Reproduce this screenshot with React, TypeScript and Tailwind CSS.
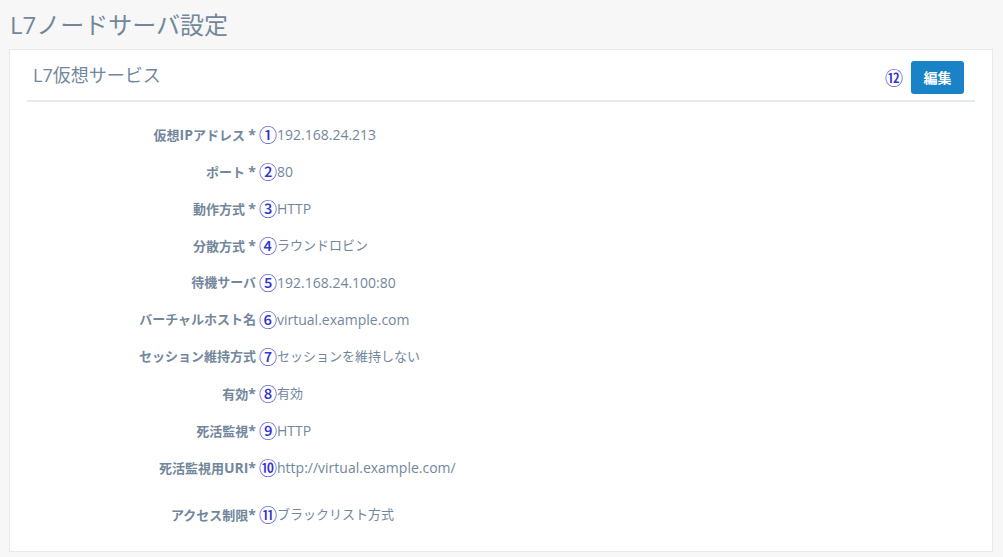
import React from "react";

type Row = { label: React.ReactNode; num: string; value: string; latin?: boolean; extra?: string };

const L = ({ children }: { children: React.ReactNode }) => (
  <span className="text-[14px]">{children}</span>
);

const rows: Row[] = [
  { label: <>仮想<L>IP</L>アドレス <L>*</L></>, num: "①", value: "192.168.24.213", latin: true },
  { label: <>ポート <L>*</L></>, num: "②", value: "80", latin: true },
  { label: <>動作方式 <L>*</L></>, num: "③", value: "HTTP", latin: true },
  { label: <>分散方式 <L>*</L></>, num: "④", value: "ラウンドロビン" },
  { label: "待機サーバ", num: "⑤", value: "192.168.24.100:80", latin: true },
  { label: "バーチャルホスト名", num: "⑥", value: "virtual.example.com", latin: true },
  { label: "セッション維持方式", num: "⑦", value: "セッションを維持しない" },
  { label: <>有効<L>*</L></>, num: "⑧", value: "有効" },
  { label: <>死活監視<L>*</L></>, num: "⑨", value: "HTTP", latin: true },
  { label: <>死活監視用<L>URI*</L></>, num: "⑩", value: "http://virtual.example.com/", latin: true },
  { label: <>アクセス制限<L>*</L></>, num: "⑪", value: "ブラックリスト方式", extra: "mt-[10px]" },
];

export default function App() {
  return (
    <div
      className="w-[1003px] h-[557px] bg-[#f7f7f7] text-[#73879c] overflow-hidden"
      style={{ fontFamily: '"Open Sans", "Noto Sans CJK JP", sans-serif' }}
    >
      <div className="h-[49px] flex items-center pl-[10px]">
        <h3 className="text-[24px] leading-none font-normal">L7ノードサーバ設定</h3>
      </div>
      <div className="ml-[9px] w-[984px] h-[503px] bg-white border border-[#e6e9ed] px-[17px] pt-[11px]">
        <div className="flex items-start border-b-2 border-[#e6e9ed] pb-[6px]">
          <div className="ml-[6px] mt-[2px] text-[18px] leading-[24px]">L7仮想サービス</div>
          <div className="flex-1" />
          <span className="self-center text-[18px] leading-none font-medium text-[#3535d0] mr-[8px]">⑫</span>
          <button className="h-[33px] w-[53px] mr-[11px] rounded-[3px] bg-[#1a82c6] text-white text-[14px] font-bold">
            編集
          </button>
        </div>
        <div className="pt-[14px]">
          {rows.map((r) => (
            <div key={r.num} className={`flex items-center h-[37px] text-[13px] ${r.extra ?? ""}`}>
              <div className="w-[229px] text-right font-bold leading-none">{r.label}</div>
              <span className="ml-[3px] text-[18px] leading-none font-medium text-[#3535d0]">{r.num}</span>
              <span className={r.latin ? "text-[14px]" : ""}>{r.value}</span>
            </div>
          ))}
        </div>
      </div>
    </div>
  );
}
